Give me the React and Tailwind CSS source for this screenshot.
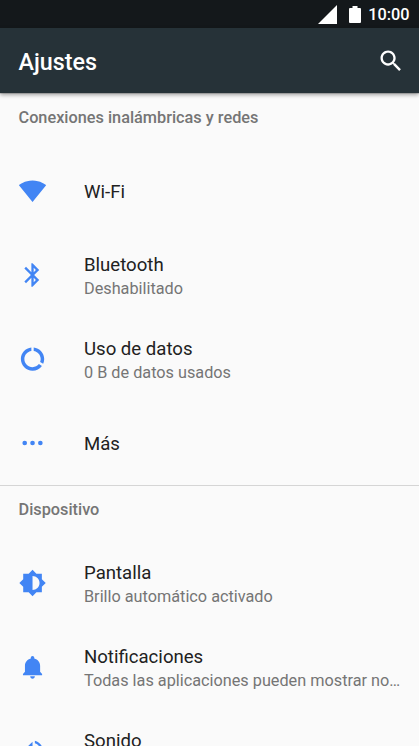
const sections = [
  {
    title: 'Conexiones inalámbricas y redes',
    items: [
      { icon: 'wifi', label: 'Wi-Fi' },
      { icon: 'bluetooth', label: 'Bluetooth', detail: 'Deshabilitado' },
      { icon: 'data', label: 'Uso de datos', detail: '0 B de datos usados' },
      { icon: 'more', label: 'Más' },
    ],
  },
  {
    title: 'Dispositivo',
    items: [
      { icon: 'display', label: 'Pantalla', detail: 'Brillo automático activado' },
      { icon: 'bell', label: 'Notificaciones', detail: 'Todas las aplicaciones pueden mostrar no…' },
      { icon: 'sound', label: 'Sonido', detail: '\u00a0' },
    ],
  },
];

const icons = {
  wifi: 'M12.01 21.49L23.64 7c-.45-.34-4.93-4-11.64-4C5.28 3 .81 6.66.36 7l11.63 14.49.01.01.01-.01z',
  bluetooth: 'M17.71 7.71L12 2h-1v7.59L6.41 5 5 6.41 10.59 12 5 17.59 6.41 19 11 14.41V22h1l5.71-5.71-4.3-4.29 4.3-4.29zM13 5.83l1.88 1.88L13 9.59V5.83zm1.88 10.46L13 18.17v-3.76l1.88 1.88z',
  data: 'M13 2.05v3.03c3.39.49 6 3.39 6 6.92 0 .9-.18 1.75-.48 2.54l2.6 1.53c.56-1.24.88-2.62.88-4.07 0-5.18-3.95-9.45-9-9.95zM12 19c-3.87 0-7-3.13-7-7 0-3.53 2.61-6.43 6-6.92V2.05c-5.06.5-9 4.76-9 9.95 0 5.52 4.47 10 9.99 10 3.31 0 6.24-1.61 8.06-4.09l-2.6-1.53C16.17 17.98 14.21 19 12 19z',
  more: 'M5.3 10a2 2 0 1 0 0 4 2 2 0 0 0 0-4zm13.4 0a2 2 0 1 0 0 4 2 2 0 0 0 0-4zM12 10a2 2 0 1 0 0 4 2 2 0 0 0 0-4z',
  display: 'M20 15.31L23.31 12 20 8.69V4h-4.69L12 .69 8.69 4H4v4.69L.69 12 4 15.31V20h4.69L12 23.31 15.31 20H20v-4.69zM12 18V6c3.31 0 6 2.69 6 6s-2.69 6-6 6z',
  bell: 'M12 22c1.1 0 2-.9 2-2h-4c0 1.1.9 2 2 2zm6.5-6v-5c0-3.07-1.9-5.64-5-6.32V4c0-.83-.67-1.5-1.5-1.5s-1.5.67-1.5 1.5v.68C7.4 5.36 5.5 7.92 5.5 11v5l-1.7 2v1h16.4v-1l-1.7-2z',
  sound: 'M3 9v6h4l5 5V4L7 9H3zm13.5 3c0-1.77-1.02-3.29-2.5-4.03v8.05c1.48-.73 2.5-2.25 2.5-4.02zM14 3.23v2.06c2.89.86 5 3.54 5 6.71s-2.11 5.85-5 6.71v2.06c4.01-.91 7-4.49 7-8.77s-2.99-7.86-7-8.77z',
  search: 'M15.5 14h-.79l-.28-.27C15.41 12.59 16 11.11 16 9.5 16 5.91 13.09 3 9.5 3S3 5.91 3 9.5 5.91 16 9.5 16c1.61 0 3.09-.59 4.23-1.57l.27.28v.79l5 4.99L20.49 19l-4.99-5zm-6 0C7.01 14 5 11.99 5 9.5S7.01 5 9.5 5 14 7.01 14 9.5 11.99 14 9.5 14z',
};

function Icon({ name, className, viewBox = '0 0 24 24' }) {
  return (
    <svg viewBox={viewBox} fill="currentColor" className={`size-7 shrink-0 ${className}`}>
      <path d={icons[name]} />
    </svg>
  );
}

function StatusBar() {
  return (
    <div className="flex h-7 items-center justify-end bg-[#14181b] pr-[9.5px] text-white">
      <svg viewBox="0 0 19 19" fill="currentColor" className="mr-3 size-[19px]">
        <path d="M0 19H19V0z" />
      </svg>
      <svg viewBox="0 0 12 17" fill="currentColor" className="mr-[7.5px] h-[17px] w-3">
        <path d="M1 2h2.5V0h5v2H11a1 1 0 0 1 1 1v13a1 1 0 0 1-1 1H1a1 1 0 0 1-1-1V3a1 1 0 0 1 1-1z" />
      </svg>
      <span className="pt-0.5 text-[16.3px] font-medium leading-none">10:00</span>
    </div>
  );
}

function SettingRow({ icon, label, detail }) {
  return (
    <li className="flex h-[84px] items-center pl-[19px] pr-[18px]">
      <Icon name={icon} viewBox="0.4 0 24 24" className="mr-[37px] overflow-visible text-[#4285f4]" />
      <div className="min-w-0 flex-1 pt-0.5">
        <div className="text-[18.6px] leading-[25px] text-[#212121]">{label}</div>
        {detail && <div className="whitespace-nowrap text-[16.25px] leading-[22px] text-[#757575]">{detail}</div>}
      </div>
    </li>
  );
}

export default function App() {
  return (
    <div className="flex h-[746px] w-[419px] flex-col overflow-hidden bg-[#fafafa] font-['Roboto',sans-serif]">
      <StatusBar />
      <header className="relative flex h-[65px] shrink-0 items-center justify-between bg-[#263238] pl-[18.5px] pr-[14px] text-white shadow-[0_2px_4px_rgba(0,0,0,0.35)]">
        <h1 className="pt-0.5 text-[23.3px] font-medium leading-7">Ajustes</h1>
        <Icon name="search" className="text-white" />
      </header>
      <main className="min-h-0 flex-1 overflow-hidden">
        {sections.map((section) => (
          <section key={section.title}>
            <h2 className="h-14 border-t border-[#d5d5d5] pl-[18.5px] pt-[13px] text-[16.3px] font-medium leading-[22px] text-[#757575]">
              {section.title}
            </h2>
            <ul>
              {section.items.map((item) => (
                <SettingRow key={item.label} {...item} />
              ))}
            </ul>
          </section>
        ))}
      </main>
    </div>
  );
}
